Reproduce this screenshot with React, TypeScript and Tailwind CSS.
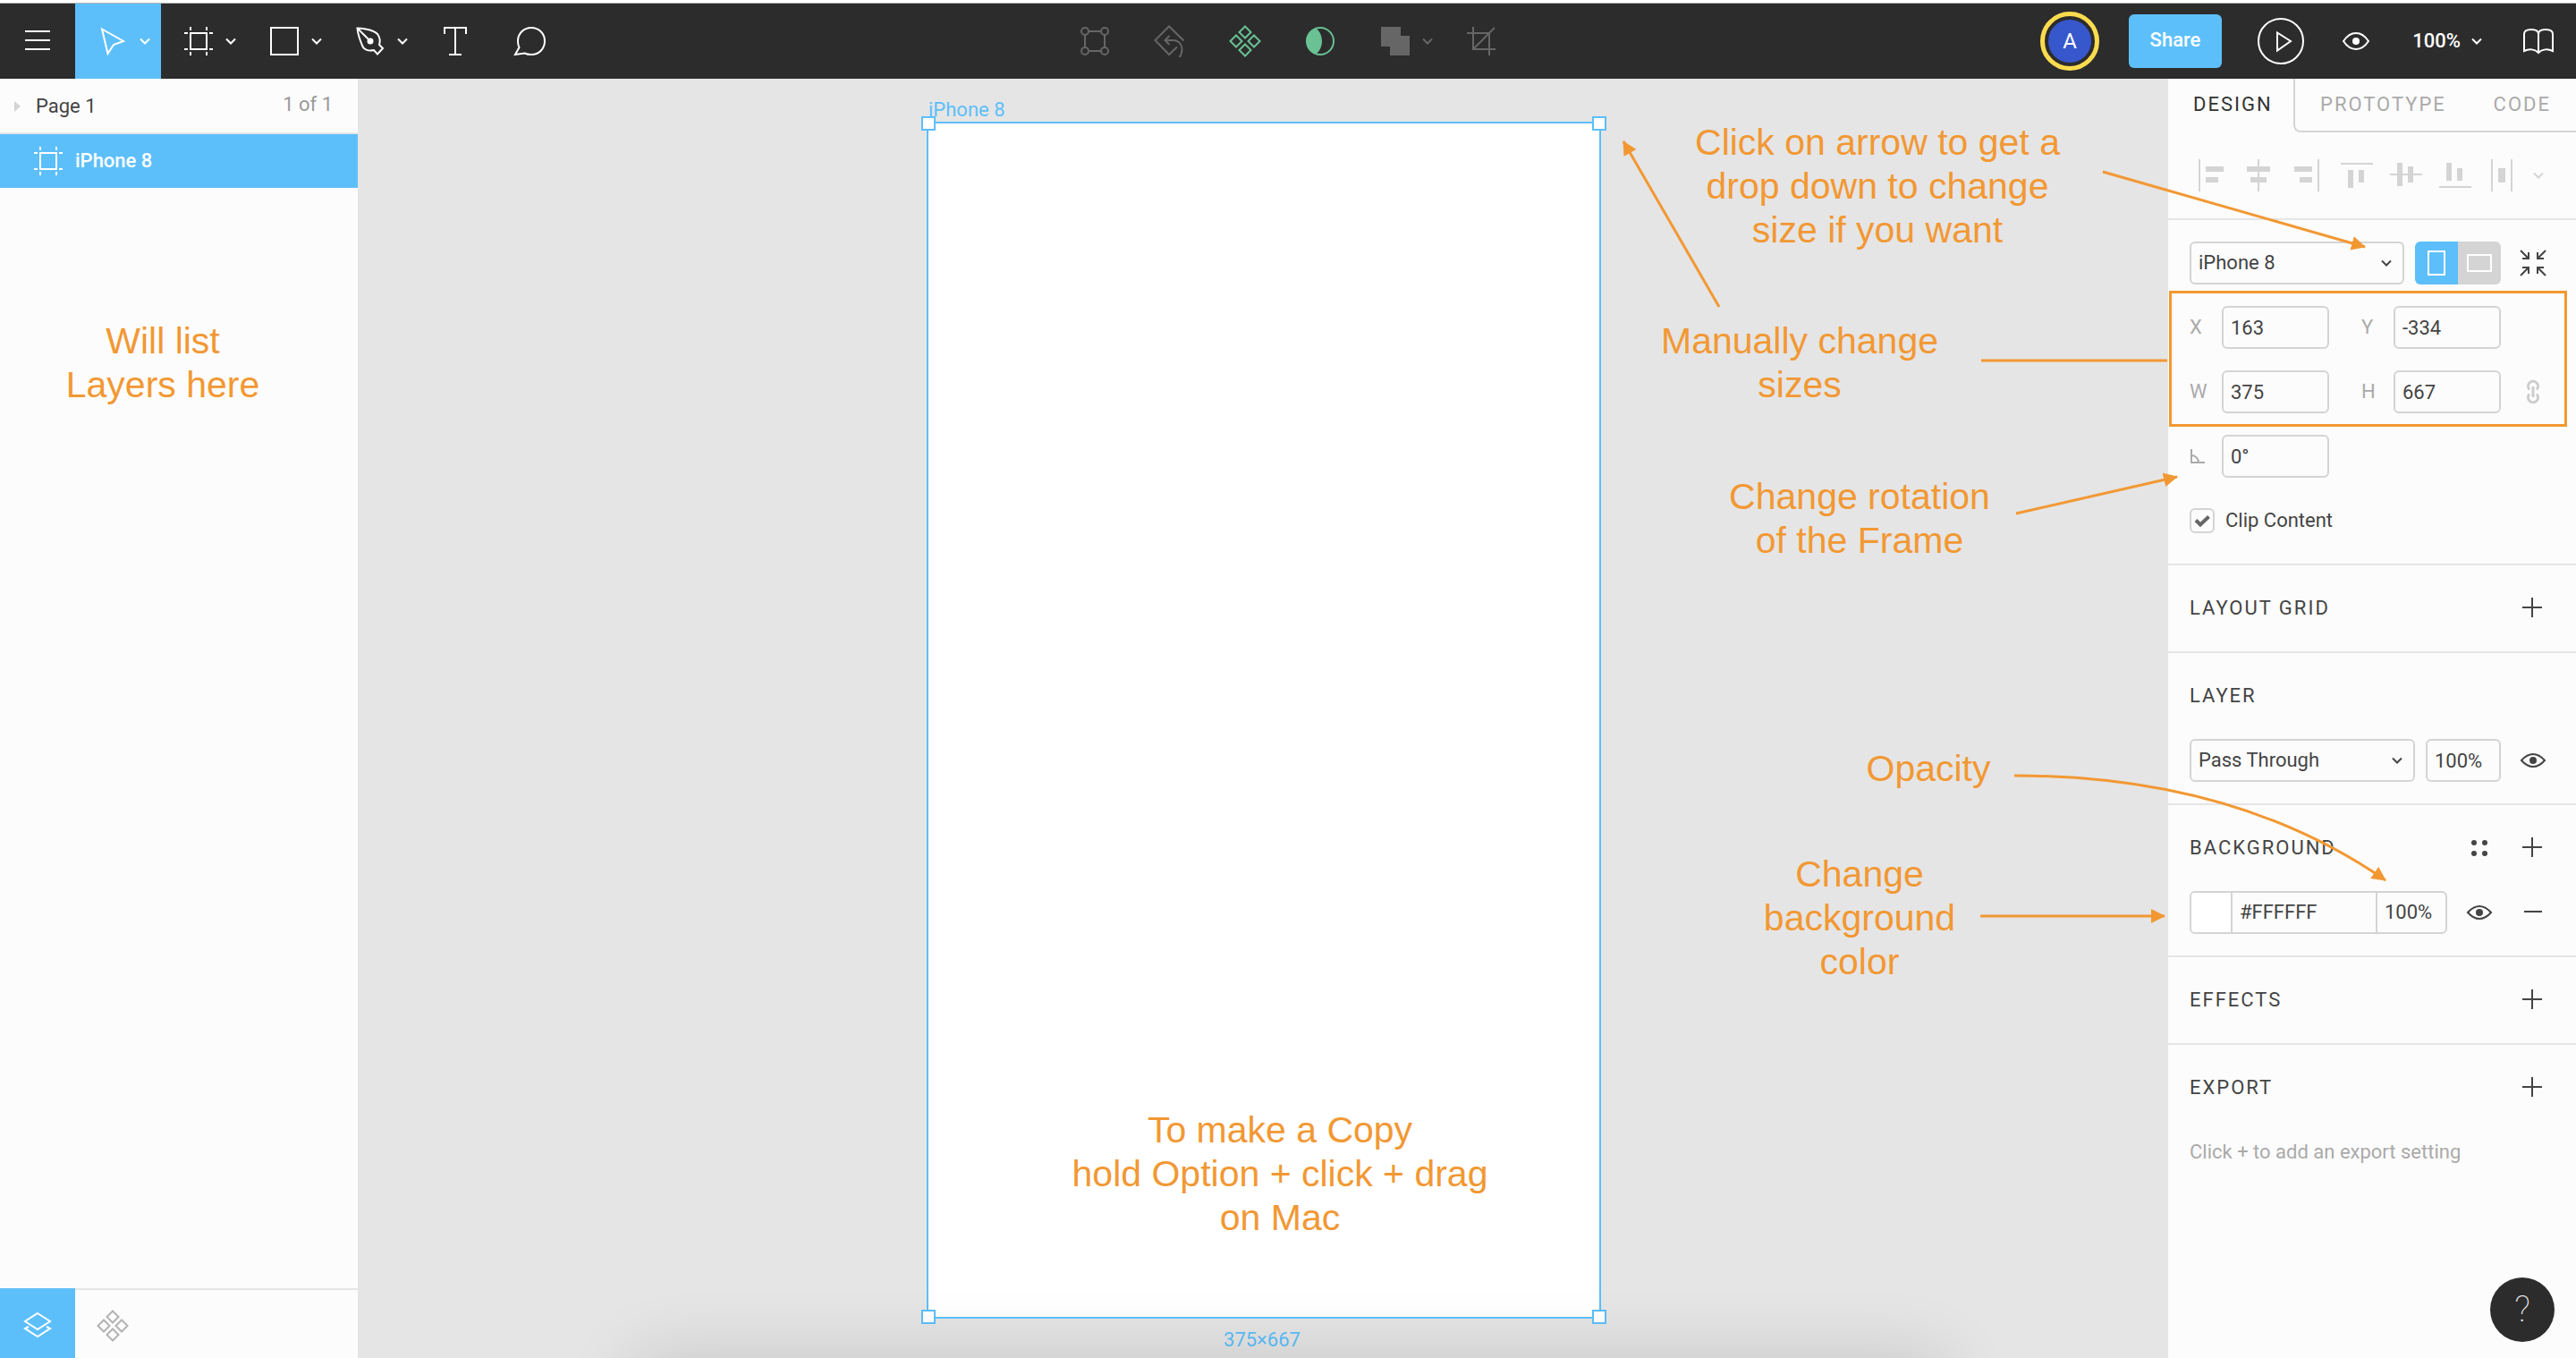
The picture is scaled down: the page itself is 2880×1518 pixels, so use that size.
import type { ReactNode } from "react";

type IconProps = {
  w: number;
  h: number;
  children: ReactNode;
  className?: string;
};

function Icon({ w, h, children, className = "" }: IconProps) {
  return (
    <svg
      width={w}
      height={h}
      viewBox={`0 0 ${w} ${h}`}
      fill="none"
      stroke="currentColor"
      strokeWidth={2}
      aria-hidden="true"
      className={`shrink-0 overflow-visible ${className}`}
    >
      {children}
    </svg>
  );
}

function Chevron({ className = "" }: { className?: string }) {
  return (
    <Icon w={12} h={8} className={className}>
      <path d="M1 1.5 6 6.5 11 1.5" />
    </Icon>
  );
}

function FrameIcon() {
  return (
    <Icon w={32} h={32}>
      <rect x="7" y="7" width="18" height="18" />
      <path d="M7 0v4M25 0v4M7 28v4M25 28v4M0 7h4M28 7h4M0 25h4M28 25h4" />
    </Icon>
  );
}

function ComponentsIcon() {
  return (
    <Icon w={36} h={36}>
      <path d="M18 1.5l6.5 6.5-6.5 6.5L11.5 8zM8 11.5l6.5 6.5-6.5 6.5L1.5 18zM28 11.5l6.5 6.5-6.5 6.5L21.5 18zM18 21.5l6.5 6.5-6.5 6.5L11.5 28z" />
    </Icon>
  );
}

function EyeIcon() {
  return (
    <Icon w={28} h={16}>
      <path d="M1 8C5 3.5 9.5 1 14 1s9 2.5 13 7c-4 4.5-8.500 7-13 7S5 12.5 1 8z" />
      <circle cx="14" cy="8" r="4" fill="currentColor" stroke="none" />
    </Icon>
  );
}

function PlusIcon() {
  return (
    <Icon w={24} h={24}>
      <path d="M11 0v22M0 11h22" />
    </Icon>
  );
}

type ToolProps = { label: string; children: ReactNode; className?: string };

function Tool({ label, children, className = "" }: ToolProps) {
  return (
    <button
      type="button"
      aria-label={label}
      className={`flex w-[84px] items-center justify-center ${className}`}
    >
      {children}
    </button>
  );
}

function MenuTool({ label, children, className = "" }: ToolProps) {
  return (
    <button
      type="button"
      aria-label={label}
      className={`flex items-center gap-[14px] pr-3 pl-[26px] ${className}`}
    >
      {children}
      <Chevron />
    </button>
  );
}

function Toolbar() {
  return (
    <header className="grid h-[84px] shrink-0 grid-cols-[1fr_auto_1fr] bg-[#2c2c2c] text-white">
      <div className="flex">
        <Tool label="Menu" className="pb-[2px]">
          <Icon w={28} h={22}>
            <path d="M0 1h28M0 11h28M0 21h28" />
          </Icon>
        </Tool>
        <MenuTool label="Move" className="bg-[#5dbffa]">
          <Icon w={32} h={32}>
            <path d="M4 2.5 28 16l-11 4-6.5 10z" />
          </Icon>
        </MenuTool>
        <MenuTool label="Frame">
          <FrameIcon />
        </MenuTool>
        <MenuTool label="Rectangle">
          <Icon w={32} h={32}>
            <rect x="1" y="1" width="30" height="30" />
          </Icon>
        </MenuTool>
        <MenuTool label="Pen">
          <Icon w={32} h={32}>
            <path d="M1.5 1.5C10 1.5 20 4 24 8c3 4 3.5 7 2 12l4 4-6 6.5-4-4.5c-6 1.500-11-.5-12.5-4C4 14 2 8 1.5 1.5z" />
            <path d="M1.5 1.5 16 16" />
            <circle cx="16" cy="16" r="3.5" fill="currentColor" stroke="none" />
          </Icon>
        </MenuTool>
        <Tool label="Text">
          <Icon w={32} h={32}>
            <path d="M3 8V1h24v7M15 1v30M8 31h14" />
          </Icon>
        </Tool>
        <Tool label="Comment">
          <Icon w={40} h={32}>
            <path d="M6.5 23 2 31l10.5-1.5c2.5 1.2 5 1.5 7.5 1.5 8.5 0 15-6.5 15-15S28.5 1 20 1 5 7.5 5 16c0 2.5.3 5 1.5 7z" />
          </Icon>
        </Tool>
      </div>

      <div className="flex text-[#666666]">
        <Tool label="Edit object">
          <Icon w={32} h={32}>
            <circle cx="5" cy="5" r="4" />
            <circle cx="27" cy="5" r="4" />
            <circle cx="5" cy="27" r="4" />
            <circle cx="27" cy="27" r="4" />
            <path d="M9 5h14M9 27h14M5 9v14M27 9v14" />
          </Icon>
        </Tool>
        <Tool label="Reset instance">
          <Icon w={36} h={36}>
            <path d="M33.5 17.5 17 1.5 1.5 17 17 33l9-8.5" />
            <path d="M12.5 17H21c7 0 10.5 5 10.5 10 0 4-1 6.5-3 9M17.5 12l-5 5 5 5" />
          </Icon>
        </Tool>
        <Tool label="Create component" className="text-[#69c194]">
          <ComponentsIcon />
        </Tool>
        <Tool label="Use as mask" className="text-[#69c194]">
          <Icon w={32} h={32}>
            <circle cx="16" cy="16" r="15" />
            <path
              d="M11.5 1.5a15 15 0 0 0 0 29C15.5 27 18 22 18 16S15.5 5 11.5 1.5z"
              fill="currentColor"
              stroke="none"
            />
          </Icon>
        </Tool>
        <MenuTool label="Boolean groups">
          <Icon w={32} h={32}>
            <path d="M0 0h22v10h10v22H10V22H0z" fill="currentColor" stroke="none" />
          </Icon>
        </MenuTool>
        <Tool label="Crop">
          <Icon w={32} h={32}>
            <path d="M0 7h25v25M7 0v25h25M7 25 31 1" />
          </Icon>
        </Tool>
      </div>

      <div className="flex items-center justify-end">
        <button
          type="button"
          aria-label="Account"
          className="mr-[33px] flex size-[66px] items-center justify-center rounded-full border-[5px] border-[#fbdc4f]"
        >
          <span className="flex size-12 items-center justify-center rounded-full bg-[#3757cc] text-[24px] leading-none">
            A
          </span>
        </button>
        <button
          type="button"
          className="mr-6 h-[60px] w-[104px] rounded-md bg-[#5dbffa] pb-[2px] text-[22px] font-medium"
        >
          Share
        </button>
        <Tool label="Present" className="h-full">
          <Icon w={52} h={52}>
            <circle cx="26" cy="26" r="25" />
            <path d="M22 16.5v20L37 26z" />
          </Icon>
        </Tool>
        <Tool label="View options" className="h-full">
          <Icon w={30} h={20}>
            <path d="M1 10C5 4 10 1 15 1s10 3 14 9c-4 6-9 9-14 9S5 16 1 10z" />
            <circle cx="15" cy="10" r="4" fill="currentColor" stroke="none" />
          </Icon>
        </Tool>
        <button
          type="button"
          className="flex h-full w-[120px] items-center justify-center gap-3 text-[22px] font-medium"
        >
          100%
          <Chevron />
        </button>
        <Tool label="Library" className="h-full">
          <Icon w={34} h={28}>
            <path d="M17 27V6c0-3.5-3.5-5-8-5S1 2.5 1 6v19c5-2.5 12-2.5 16 2 4-4.5 11-4.5 16-2V6c0-3.5-3.5-5-8-5s-8 1.5-8 5" />
          </Icon>
        </Tool>
      </div>
    </header>
  );
}

function LayersPanel() {
  return (
    <aside className="relative flex w-[400px] shrink-0 flex-col bg-[#fcfcfc]">
      <div className="flex h-[62px] items-center border-b-2 border-[#e5e5e5] pt-[2px] pr-7 pl-4">
        <Icon w={8} h={12} className="text-[#d4d4d4]">
          <path d="M0 0l7 6-7 6z" fill="currentColor" stroke="none" />
        </Icon>
        <span className="ml-4 flex-1">Page 1</span>
        <span className="pb-1 text-[#999999]">1 of 1</span>
      </div>
      <button
        type="button"
        className="flex h-[60px] items-center gap-[14px] bg-[#5dbffa] pl-[38px] font-medium text-white"
      >
        <FrameIcon />
        iPhone 8
      </button>
      <Note className="top-[269px] left-[32px] w-[300px]">
        Will list
        <br />
        Layers here
      </Note>
      <div className="mt-auto flex h-[78px]">
        <Tool label="Layers" className="bg-[#5dbffa] pt-1 text-white">
          <Icon w={30} h={28}>
            <path d="M15 1l14 9-14 9L1 10zM5 16l-4 2 14 9 14-9-4-2" />
          </Icon>
        </Tool>
        <div className="flex flex-1 border-t-2 border-[#e5e5e5]">
          <Tool label="Components" className="pt-1 text-[#b3b3b3]">
            <ComponentsIcon />
          </Tool>
        </div>
      </div>
    </aside>
  );
}

function Note({ children, className }: { children: ReactNode; className: string }) {
  return (
    <p
      className={`absolute text-center font-['Liberation_Sans',Arial,sans-serif] text-[41px] leading-[49px] text-[#f29833] ${className}`}
    >
      {children}
    </p>
  );
}

function Canvas() {
  return (
    <main className="relative flex min-w-0 flex-1 flex-col items-center overflow-hidden bg-[#e5e5e5] pl-[2px] text-[#5dbffa]">
      <div className="relative mt-12 h-[1338px] w-[754px] border-2 border-[#5dbffa] bg-white">
        <span className="absolute -top-[29px] left-0 leading-7">iPhone 8</span>
        <Note className="top-[1101px] left-[143px] w-[500px]">
          To make a Copy
          <br />
          hold Option + click + drag
          <br />
          on Mac
        </Note>
        <span className="absolute -top-2 -left-2 size-4 border-2 border-[#5dbffa] bg-white" />
        <span className="absolute -top-2 -right-2 size-4 border-2 border-[#5dbffa] bg-white" />
        <span className="absolute -bottom-2 -left-2 size-4 border-2 border-[#5dbffa] bg-white" />
        <span className="absolute -right-2 -bottom-2 size-4 border-2 border-[#5dbffa] bg-white" />
      </div>
      <span className="mt-[10px] mr-1 leading-7">375×667</span>
      <div className="absolute top-full right-[250px] left-[310px] h-40 shadow-[0_0_80px_rgba(0,0,0,0.14)]" />
    </main>
  );
}

function AlignIcon({ label, lines, bars }: { label: string; lines: string; bars: string }) {
  return (
    <button type="button" className="flex w-[55px] justify-center" aria-label={label}>
      <Icon w={36} h={36}>
        <path d={lines} />
        <path d={bars} fill="currentColor" stroke="none" />
      </Icon>
    </button>
  );
}

function Section({ children }: { children: ReactNode }) {
  return (
    <section className="border-b-2 border-[#e5e5e5] py-3 last:border-b-0">{children}</section>
  );
}

function Row({ children, className = "" }: { children: ReactNode; className?: string }) {
  return <div className={`flex h-[72px] items-center px-6 ${className}`}>{children}</div>;
}

function SlotButton({ label, children }: { label: string; children: ReactNode }) {
  return (
    <button
      type="button"
      aria-label={label}
      className="ml-3 flex h-12 w-12 shrink-0 items-center justify-center"
    >
      {children}
    </button>
  );
}

function Title({ children }: { children: ReactNode }) {
  return <h2 className="flex-1 tracking-[2px]">{children}</h2>;
}

function NumberField({ label, name, value }: { label: ReactNode; name: string; value: string }) {
  return (
    <label className="flex items-center">
      <span className="w-9 text-[#aaaaaa]">{label}</span>
      <input
        aria-label={name}
        defaultValue={value}
        className="h-12 w-[120px] rounded-md border-2 border-[#d4d4d4] px-2 outline-none"
      />
    </label>
  );
}

function SelectField({ label, value, className }: { label: string; value: string; className: string }) {
  return (
    <div className={`relative ${className}`}>
      <select
        aria-label={label}
        defaultValue={value}
        className="h-12 w-full appearance-none rounded-md border-2 border-[#d4d4d4] bg-transparent px-2 outline-none"
      >
        <option>{value}</option>
      </select>
      <Chevron className="pointer-events-none absolute top-5 right-[14px]" />
    </div>
  );
}

function DesignPanel() {
  return (
    <aside className="flex w-[456px] shrink-0 flex-col bg-[#fcfcfc]">
      <nav className="flex h-[60px] tracking-[2px]">
        <button type="button" className="w-[140px] pb-[2px] pl-7 text-left text-[#333333]">
          DESIGN
        </button>
        <div className="flex flex-1 justify-between rounded-bl-lg border-b-2 border-l-2 border-[#d4d4d4] pr-7 pl-7 text-[#aaaaaa]">
          <button type="button">PROTOTYPE</button>
          <button type="button">CODE</button>
        </div>
      </nav>

      <div className="flex h-[98px] items-center border-b-2 border-[#e5e5e5] pl-[18px] text-[#d4d4d4]">
        <AlignIcon label="Align left" lines="M7 0v36" bars="M14 8h20v6H14zM14 20h14v6H14z" />
        <AlignIcon
          label="Align horizontal centers"
          lines="M18 0v36"
          bars="M5 8h26v6H5zM9 20h18v6H9z"
        />
        <AlignIcon label="Align right" lines="M30 0v36" bars="M3 8h20v6H3zM9 20h14v6H9z" />
        <AlignIcon label="Align top" lines="M0 5h36" bars="M8 12h6v20H8zM20 12h6v14h-6z" />
        <AlignIcon
          label="Align vertical centers"
          lines="M0 17h36"
          bars="M8 4h6v26H8zM20 8h6v18h-6z"
        />
        <AlignIcon label="Align bottom" lines="M0 31h36" bars="M8 4h6v20H8zM20 10h6v14h-6z" />
        <AlignIcon
          label="Distribute"
          lines="M4 0v36M26 0v36"
          bars="M11 10h8v16h-8z"
        />
        <button type="button" aria-label="More alignment options" className="ml-[5px]">
          <Chevron />
        </button>
      </div>

      <Section>
        <Row>
          <SelectField label="Frame preset" value="iPhone 8" className="flex-1" />
          <div className="ml-3 flex h-12 overflow-hidden rounded-md text-white">
            <button
              type="button"
              aria-label="Portrait"
              className="flex w-12 items-center justify-center bg-[#5dbffa]"
            >
              <Icon w={20} h={28}>
                <rect x="1" y="1" width="18" height="26" />
              </Icon>
            </button>
            <button
              type="button"
              aria-label="Landscape"
              className="flex w-12 items-center justify-center bg-[#d4d4d4]"
            >
              <Icon w={28} h={20}>
                <rect x="1" y="1" width="26" height="18" />
              </Icon>
            </button>
          </div>
          <SlotButton label="Resize to fit">
            <Icon w={28} h={28}>
              <path d="M0 0l9 9M9 2v7H2M28 0l-9 9M19 2v7h7M0 28l9-9M9 26v-7H2M28 28l-9-9M19 26v-7h7" />
            </Icon>
          </SlotButton>
        </Row>
        <div className="relative">
          <Row className="gap-9">
            <NumberField label="X" name="X" value="163" />
            <NumberField label="Y" name="Y" value="-334" />
          </Row>
          <Row>
            <div className="flex flex-1 gap-9">
              <NumberField label="W" name="Width" value="375" />
              <NumberField label="H" name="Height" value="667" />
            </div>
            <SlotButton label="Constrain proportions">
              <Icon w={14} h={28} className="text-[#cccccc]">
                <path
                  strokeWidth="3"
                  d="M3 11.5a5.5 5.5 0 1 1 8 0M3 16.5a5.5 5.5 0 1 0 8 0M7 8v12"
                />
              </Icon>
            </SlotButton>
          </Row>
          <div className="pointer-events-none absolute -top-[5px] right-[10px] -bottom-[3px] left-px border-[3px] border-[#f29833]" />
        </div>
        <Row>
          <NumberField
            name="Rotation"
            value="0°"
            label={
              <Icon w={18} h={16}>
                <path d="M2 0v15h15M2 7a8 8 0 0 1 8 8" />
              </Icon>
            }
          />
        </Row>
        <Row>
          <label className="flex items-center gap-3">
            <span className="relative size-7">
              <input
                type="checkbox"
                defaultChecked
                className="peer block size-7 appearance-none rounded-md border-2 border-[#d4d4d4]"
              />
              <Icon
                w={28}
                h={28}
                className="pointer-events-none absolute inset-0 hidden text-[#666666] peer-checked:block"
              >
                <path strokeWidth="4" d="M7 13.5l5 5 9.5-9" />
              </Icon>
            </span>
            Clip Content
          </label>
        </Row>
      </Section>

      <Section>
        <Row>
          <Title>LAYOUT GRID</Title>
          <SlotButton label="Add layout grid">
            <PlusIcon />
          </SlotButton>
        </Row>
      </Section>

      <Section>
        <Row>
          <Title>LAYER</Title>
        </Row>
        <Row>
          <SelectField label="Blend mode" value="Pass Through" className="flex-1" />
          <input
            aria-label="Layer opacity"
            defaultValue="100%"
            className="ml-3 h-12 w-[84px] rounded-md border-2 border-[#d4d4d4] px-2 outline-none"
          />
          <SlotButton label="Toggle layer visibility">
            <EyeIcon />
          </SlotButton>
        </Row>
      </Section>

      <Section>
        <Row>
          <Title>BACKGROUND</Title>
          <SlotButton label="Styles">
            <Icon w={18} h={18}>
              <g fill="currentColor" stroke="none">
                <circle cx="3" cy="3" r="3" />
                <circle cx="15" cy="3" r="3" />
                <circle cx="3" cy="15" r="3" />
                <circle cx="15" cy="15" r="3" />
              </g>
            </Icon>
          </SlotButton>
          <SlotButton label="Add background">
            <PlusIcon />
          </SlotButton>
        </Row>
        <Row>
          <div className="flex h-12 flex-1 overflow-hidden rounded-md border-2 border-[#d4d4d4]">
            <button type="button" aria-label="Background color" className="w-[44px] bg-white" />
            <input
              aria-label="Hex color"
              defaultValue="#FFFFFF"
              className="min-w-0 flex-1 border-l-2 border-[#d4d4d4] px-2 outline-none"
            />
            <input
              aria-label="Background opacity"
              defaultValue="100%"
              className="w-[78px] border-l-2 border-[#d4d4d4] px-2 outline-none"
            />
          </div>
          <SlotButton label="Toggle background visibility">
            <EyeIcon />
          </SlotButton>
          <SlotButton label="Remove background">
            <Icon w={20} h={4}>
              <path d="M0 1h20" />
            </Icon>
          </SlotButton>
        </Row>
      </Section>

      <Section>
        <Row>
          <Title>EFFECTS</Title>
          <SlotButton label="Add effect">
            <PlusIcon />
          </SlotButton>
        </Row>
      </Section>

      <Section>
        <Row>
          <Title>EXPORT</Title>
          <SlotButton label="Add export setting">
            <PlusIcon />
          </SlotButton>
        </Row>
        <Row className="text-[#aaaaaa]">Click + to add an export setting</Row>
      </Section>
    </aside>
  );
}

/* Callouts pinned to the right edge so they stay with the design panel. */
function Callouts() {
  return (
    <div className="pointer-events-none absolute top-0 right-0 h-[1200px] w-[1080px]">
      <Note className="top-[135px] left-[59px] w-[480px]">
        Click on arrow to get a
        <br />
        drop down to change
        <br />
        size if you want
      </Note>
      <Note className="top-[357px] left-[12px] w-[400px]">
        Manually change
        <br />
        sizes
      </Note>
      <Note className="top-[531px] left-[79px] w-[400px]">
        Change rotation
        <br />
        of the Frame
      </Note>
      <Note className="top-[835px] left-[236px] w-[240px]">Opacity</Note>
      <Note className="top-[953px] left-[159px] w-[240px]">
        Change
        <br />
        background
        <br />
        color
      </Note>
      <svg
        viewBox="1800 0 1080 1200"
        className="absolute inset-0 size-full"
        fill="none"
        stroke="#f29833"
        strokeWidth="3"
        aria-hidden="true"
      >
        <defs>
          <marker
            id="head"
            viewBox="0 0 16 16"
            refX="15"
            refY="8"
            markerWidth="16"
            markerHeight="16"
            markerUnits="userSpaceOnUse"
            orient="auto"
          >
            <path d="M0 0l16 8-16 8z" fill="#f29833" stroke="none" />
          </marker>
        </defs>
        <path d="M2351 192L2644 276" markerEnd="url(#head)" />
        <path d="M1922 343L1815 158" markerEnd="url(#head)" />
        <path d="M2215 403H2423" />
        <path d="M2254 574L2434 533" markerEnd="url(#head)" />
        <path d="M2252 867Q2498 867 2667 984" markerEnd="url(#head)" />
        <path d="M2214 1024H2420" markerEnd="url(#head)" />
      </svg>
    </div>
  );
}

export default function App() {
  return (
    <div className="relative flex min-h-screen flex-col overflow-hidden bg-white font-['Roboto',sans-serif] text-[22px] leading-7 text-[#444444]">
      <div className="h-1 shrink-0 border-b border-[#b3b3b3]" />
      <Toolbar />
      <div className="flex flex-1">
        <LayersPanel />
        <Canvas />
        <DesignPanel />
      </div>
      <Callouts />
      <button
        type="button"
        aria-label="Help"
        className="absolute right-6 bottom-[18px] size-[72px] rounded-full bg-[#2c2c2c] text-[40px] font-thin text-white"
      >
        ?
      </button>
    </div>
  );
}
